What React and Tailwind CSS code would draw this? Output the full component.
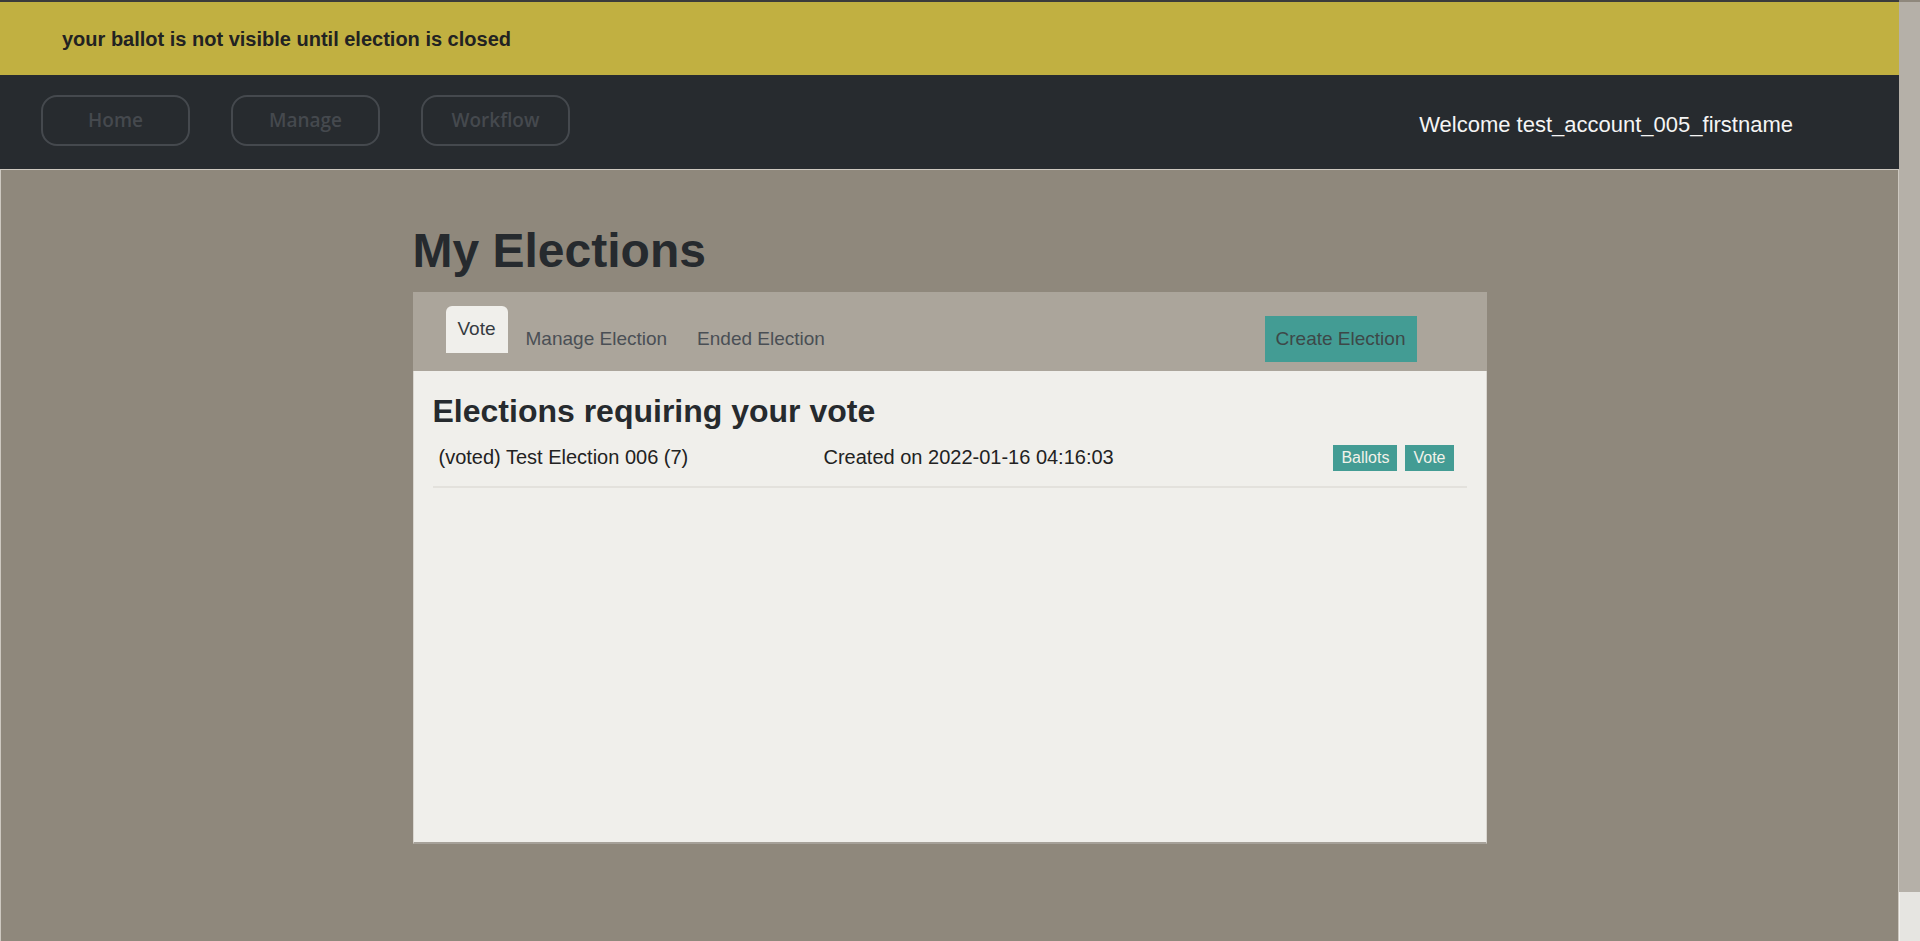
import { useState } from "react";

const tabs = ["Vote", "Manage Election", "Ended Election"];

const elections = [
  { name: "(voted) Test Election 006 (7)", created: "2022-01-16 04:16:03" },
];

export default function App() {
  const [active, setActive] = useState("Vote");

  return (
    <div className="flex h-[941px] overflow-hidden bg-[#8f887c] font-['Liberation_Sans',Arial,sans-serif]">
      <div className="flex flex-1 flex-col">
        <div className="flex h-[75px] items-center border-t-2 border-[#3b3b3b] bg-[#c1b041] pl-[62px]">
          <span className="text-[20px] font-bold text-[#222222]">your ballot is not visible until election is closed</span>
        </div>

        <nav className="flex h-[94px] items-center bg-[#272b2f] pl-[41px] pr-[106px]">
          <div className="mb-[4px] flex gap-[41px]">
            {["Home", "Manage", "Workflow"].map((label) => (
              <button
                key={label}
                className="h-[51px] w-[149px] rounded-[16px] border-2 border-[#45494e] font-['Open_Sans',sans-serif] text-[19px] font-semibold text-[#45494e]"
              >
                {label}
              </button>
            ))}
          </div>
          <span className="ml-auto pt-[5px] text-[22px] text-[#f5f5f5]">Welcome test_account_005_firstname</span>
        </nav>

        <main className="flex-1 border-x border-t border-[#cdc8c0] pt-[52px]">
          <div className="mx-auto w-[1074px]">
            <h1 className="text-[48px] font-bold leading-[58px] text-[#262a2e]">My Elections</h1>

            <div className="mt-[12px]">
              <div className="flex h-[79px] items-start bg-[#aba59b] pl-[33px] pr-[70px]">
                {tabs.map((t, i) =>
                  t === active ? (
                    <button
                      key={t}
                      onClick={() => setActive(t)}
                      className="mt-[14px] flex h-[47px] items-center rounded-t-[6px] bg-[#f0efeb] px-[12px] text-[19px] text-[#363b40]"
                    >
                      {t}
                    </button>
                  ) : (
                    <button
                      key={t}
                      onClick={() => setActive(t)}
                      className={
                        i === 1
                          ? "mt-[24px] flex h-[46px] items-center pl-[18px] pr-[15px] text-[19px] text-[#4a4f55]"
                          : "mt-[24px] flex h-[46px] items-center px-[15px] text-[19px] text-[#4a4f55]"
                      }
                    >
                      {t}
                    </button>
                  )
                )}
                <button className="ml-auto mt-[24px] h-[46px] w-[152px] bg-[#439c94] text-[19px] text-[#3d4848]">
                  Create Election
                </button>
              </div>

              <div className="h-[473px] border-x border-b-2 border-x-[#d9d6d0] border-b-[#a6a199] bg-[#f0efeb] px-[19px] pt-[21px]">
                <h3 className="text-[32px] font-bold leading-[38px] text-[#262a2e]">Elections requiring your vote</h3>
                {elections.map((e) => (
                  <div
                    key={e.name}
                    className="flex h-[58px] items-center border-b-2 border-[#e3e1dc] pb-[3px] pl-[6px] pr-[13px] text-[20px] text-[#222222]"
                  >
                    <span className="w-[385px]">{e.name}</span>
                    <span>Created on {e.created}</span>
                    <div className="ml-auto flex gap-[8px] pt-[3px]">
                      <span className="flex h-[26px] items-center bg-[#439c94] px-[8px] text-[16px] text-[#f2f2ea]">Ballots</span>
                      <span className="flex h-[26px] items-center bg-[#439c94] px-[8px] text-[16px] text-[#f2f2ea]">Vote</span>
                    </div>
                  </div>
                ))}
              </div>
            </div>
          </div>
        </main>
      </div>

      <div className="flex w-[21px] flex-col pt-[2px]">
        <div className="h-[890px] bg-[#b5b0a8]" />
        <div className="flex-1 border-l border-[#f2f1ee] bg-[#e6e5e1]" />
      </div>
    </div>
  );
}
